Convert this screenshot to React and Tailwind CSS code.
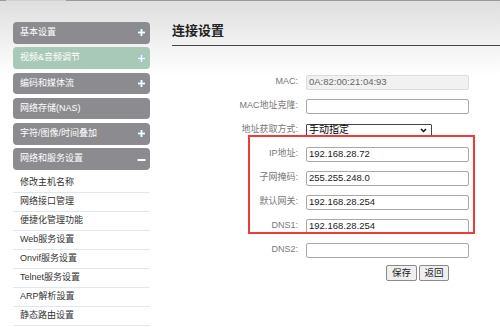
import React from 'react';

const menu = [
  { label: '基本设置', icon: 'plus' },
  { label: '视频&音频调节', icon: 'plus', active: true },
  { label: '编码和媒体流', icon: 'plus' },
  { label: '网络存储(NAS)', icon: null },
  { label: '字符/图像/时间叠加', icon: 'plus' },
  { label: '网络和服务设置', icon: 'minus' },
];

const subMenu = [
  '修改主机名称',
  '网络接口管理',
  '便捷化管理功能',
  'Web服务设置',
  'Onvif服务设置',
  'Telnet服务设置',
  'ARP解析設置',
  '静态路由设置',
];

function MenuIcon({ type }) {
  if (type === 'plus') {
    return (
      <svg width="9" height="9" viewBox="0 0 9 9" className="mr-[4px]">
        <path d="M4.5 1v7M1 4.5h7" stroke="#7fb4d6" strokeWidth="2.4" />
        <path d="M4.5 1v7M1 4.5h7" stroke="#ffffff" strokeWidth="1.6" />
      </svg>
    );
  }
  if (type === 'minus') {
    return (
      <svg width="9" height="9" viewBox="0 0 9 9" className="mr-[4px]">
        <path d="M0.5 5h8" stroke="#ffffff" strokeWidth="2" />
      </svg>
    );
  }
  return null;
}

function Row({ label, children }) {
  return (
    <div className="flex items-center h-[16px] mb-[8px]">
      <div className="w-[127px] text-right text-[9px] text-[#777] pr-[1px]">{label}</div>
      <div className="ml-[7px] flex items-center">{children}</div>
    </div>
  );
}

function TextInput({ value, readOnly }) {
  return (
    <div
      className={`w-[163px] h-[15px] border rounded-[2px] flex items-center pl-[2px] text-[9.5px] leading-none ${
        readOnly ? 'bg-[#f1f1f1] border-[#dcdcdc] text-[#666]' : 'bg-white border-[#a9a9a9] text-[#222]'
      }`}
    >
      {value}
    </div>
  );
}

export default function App() {
  return (
    <div
      className="w-[500px] h-[327px] overflow-hidden bg-[linear-gradient(to_bottom,#dedede,#ffffff_75px)]"
      style={{ fontFamily: '"Liberation Sans", "Noto Sans CJK SC", sans-serif' }}
    >
      <div className="h-px bg-[#9a9a9a] flex">
        <div className="ml-[6px] w-[60px] bg-[#cfcfcf]" />
      </div>
      <div className="flex">
        <div className="ml-[13px] w-[137px] pt-[21px]">
          {menu.map((m) => (
            <div
              key={m.label}
              className={`h-[21.5px] mb-[3.8px] rounded-[4px] flex items-center justify-between pl-[7px] text-[9px] text-white ${
                m.active ? 'bg-[#a9c9b8]' : 'bg-[#8c8c90]'
              }`}
            >
              <span>{m.label}</span>
              <MenuIcon type={m.icon} />
            </div>
          ))}
          <div>
            {subMenu.map((s) => (
              <div
                key={s}
                className="h-[19px] flex items-center pl-[7px] text-[9px] text-[#333] border-b border-[#e0e8ef]"
              >
                {s}
              </div>
            ))}
          </div>
        </div>

        <div className="ml-[22px] flex-1">
          <div className="pt-[21px] pb-[5px] border-b-[1.5px] border-[#444]">
            <div className="text-[13px] leading-[18px] font-bold text-[#222]">连接设置</div>
          </div>

          <div className="relative mt-[28px]">
            <Row label="MAC:">
              <TextInput value="0A:82:00:21:04:93" readOnly />
            </Row>
            <Row label="MAC地址克隆:">
              <TextInput value="" />
            </Row>
            <Row label="地址获取方式:">
              <div className="w-[126px] h-[13px] border border-[#444] rounded-[1px] bg-white flex items-center justify-between pl-[2px] pr-[4px] text-[10px] leading-none text-black">
                <span>手动指定</span>
                <svg width="7" height="5" viewBox="0 0 7 5">
                  <path d="M1 1l2.5 2.5L6 1" stroke="#111" strokeWidth="1.5" fill="none" />
                </svg>
              </div>
            </Row>
            <Row label="IP地址:">
              <TextInput value="192.168.28.72" />
            </Row>
            <Row label="子网掩码:">
              <TextInput value="255.255.248.0" />
            </Row>
            <Row label="默认网关:">
              <TextInput value="192.168.28.254" />
            </Row>
            <Row label="DNS1:">
              <TextInput value="192.168.28.254" />
            </Row>
            <Row label="DNS2:">
              <TextInput value="" />
            </Row>

            <div className="flex mt-[-1px] pl-[214px] gap-[2px]">
              <button className="w-[31px] h-[16px] border border-[#8a8a8a] rounded-[2px] bg-[#efefef] text-[9.5px] leading-none text-[#222]">
                保存
              </button>
              <button className="w-[30px] h-[16px] border border-[#8a8a8a] rounded-[2px] bg-[#efefef] text-[9.5px] leading-none text-[#222]">
                返回
              </button>
            </div>

            <div className="absolute left-[76px] top-[61px] w-[227px] h-[99px] border-2 border-[#f03a3a]" />
          </div>
        </div>
      </div>
    </div>
  );
}
